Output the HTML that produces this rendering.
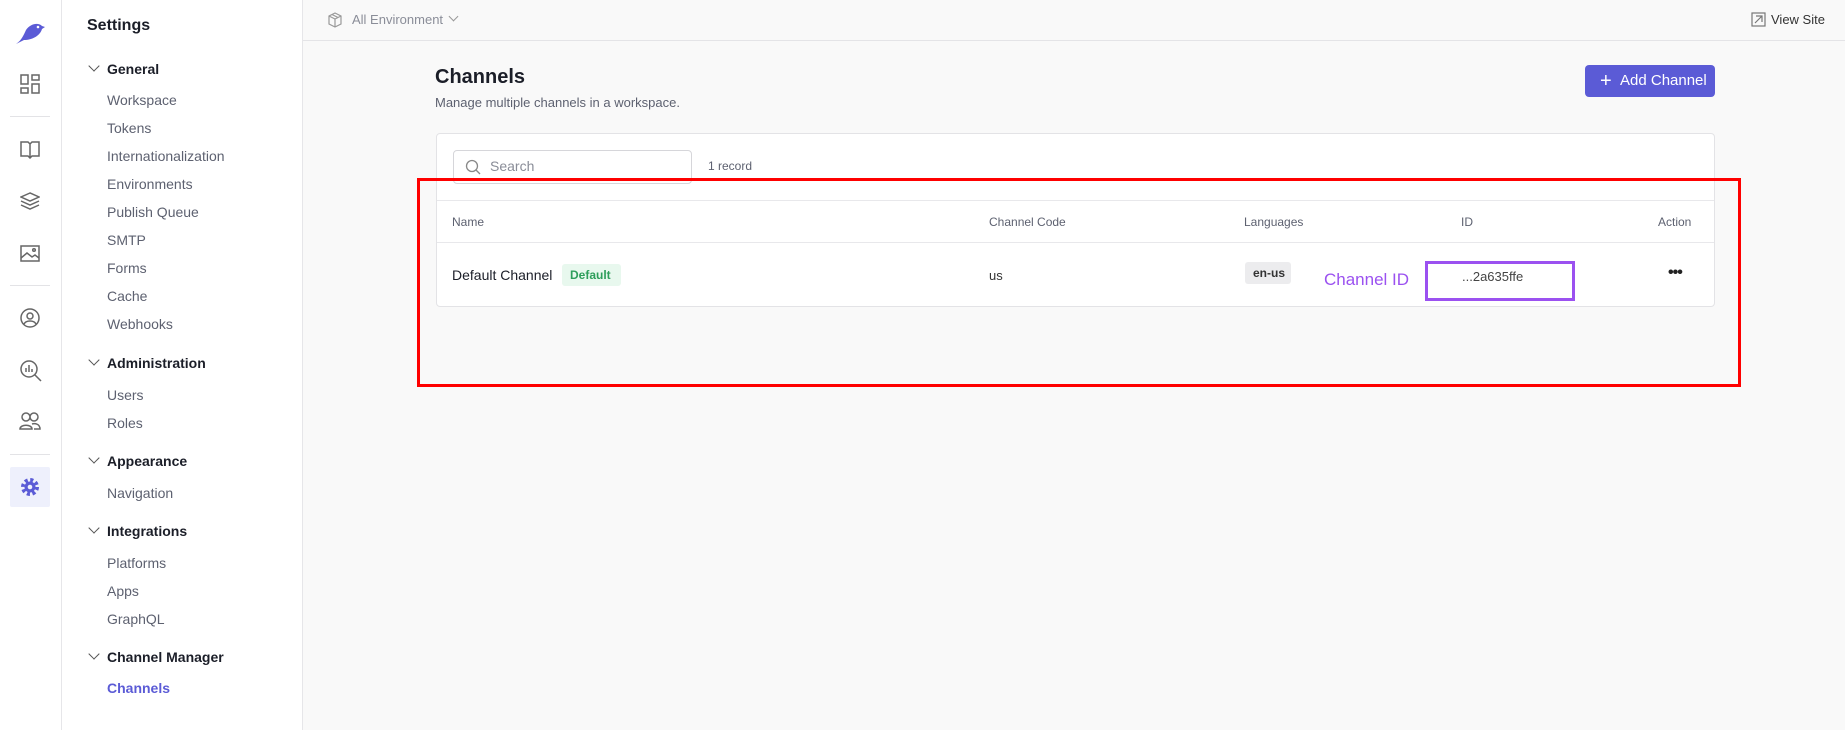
<!DOCTYPE html>
<html><head><meta charset="utf-8"><style>
*{box-sizing:border-box;margin:0;padding:0}
body{width:1845px;height:730px;overflow:hidden;background:#f9f9f9;font-family:"Liberation Sans",sans-serif;position:relative;color:#1f2430}
.a{position:absolute;white-space:nowrap}
.rail{left:0;top:0;width:62px;height:730px;background:#fff;border-right:1px solid #e6e6e9}
.side{left:62px;top:0;width:241px;height:730px;background:#fff;border-right:1px solid #e6e6e9}
.it{font-size:14px;color:#5d6170;left:107px}
.hd{font-size:14px;font-weight:bold;color:#1b1e28;left:107px}
.ch{left:90px;width:8px;height:8px;border-right:1.3px solid #555;border-bottom:1.3px solid #555;transform:rotate(45deg)}
.dv{left:10px;width:40px;height:1px;background:#e3e3e6}
svg{position:absolute}
.th{font-size:12px;color:#5d6170;top:215px}
</style></head><body>
<div class="a rail"></div>
<svg style="left:14px;top:20px" width="32" height="26" viewBox="0 0 32 26"><path d="M2 24 C8 20 10 14 12 10 C16 4 24 2 28 6 L31 7 L28 9 C26 16 18 20 10 20 Z" fill="#5b5bd6"/><circle cx="24" cy="7" r="1.3" fill="#fff"/></svg>
<svg style="left:20px;top:74px" width="20" height="20" fill="none" stroke="#666" stroke-width="1.5"><rect x="1" y="1" width="7" height="9"/><rect x="12" y="1" width="7" height="5"/><rect x="1" y="14" width="7" height="5"/><rect x="12" y="10" width="7" height="9"/></svg>
<div class="a dv" style="top:116px"></div>
<svg style="left:20px;top:139px" width="20" height="20" fill="none" stroke="#666" stroke-width="1.5"><path d="M1 3h7l2 2 2-2h7v14h-7l-2 2-2-2H1z M10 5v14"/></svg>
<svg style="left:20px;top:191px" width="20" height="20" fill="none" stroke="#666" stroke-width="1.5"><path d="M10 2L1 6l9 4 9-4z M1 10l9 4 9-4 M1 14l9 4 9-4"/></svg>
<svg style="left:20px;top:245px" width="20" height="18" fill="none" stroke="#666" stroke-width="1.5"><rect x="1" y="1" width="18" height="15"/><path d="M1 13l6-5 5 4 3-2 4 3"/><circle cx="14" cy="5" r="1.3"/></svg>
<div class="a dv" style="top:285px"></div>
<svg style="left:20px;top:308px" width="20" height="20" fill="none" stroke="#666" stroke-width="1.5"><circle cx="10" cy="10" r="9"/><circle cx="10" cy="8" r="3"/><path d="M4 16c2-4 10-4 12 0"/></svg>
<svg style="left:20px;top:360px" width="22" height="22" fill="none" stroke="#666" stroke-width="1.5"><circle cx="9" cy="9" r="8"/><path d="M15 15l6 6 M6 12V8 M9 12V5 M12 12V9"/></svg>
<svg style="left:19px;top:411px" width="22" height="20" fill="none" stroke="#666" stroke-width="1.5"><circle cx="7" cy="6" r="4"/><circle cx="15" cy="6" r="4"/><path d="M1 18c0-5 12-5 12 0z M13 13c3-1 8 0 8 5h-6"/></svg>
<div class="a dv" style="top:454px"></div>
<div class="a" style="left:10px;top:467px;width:40px;height:40px;background:#eef0fc;border-radius:2px"></div>
<svg style="left:20px;top:477px" width="20" height="20"><circle cx="10" cy="10" r="7" fill="none" stroke="#5b5bd6" stroke-width="4" stroke-dasharray="3 2.5"/><circle cx="10" cy="10" r="5.5" fill="#5b5bd6"/><circle cx="10" cy="10" r="2.3" fill="#eef0fc"/></svg>

<div class="a side"></div>
<div class="a" style="left:87px;top:17px;font-size:16px;font-weight:bold;color:#1b1e28">Settings</div>
<div class="a ch" style="top:62px"></div><div class="a hd" style="top:61px">General</div>
<div class="a it" style="top:92px">Workspace</div>
<div class="a it" style="top:120px">Tokens</div>
<div class="a it" style="top:148px">Internationalization</div>
<div class="a it" style="top:176px">Environments</div>
<div class="a it" style="top:204px">Publish Queue</div>
<div class="a it" style="top:232px">SMTP</div>
<div class="a it" style="top:260px">Forms</div>
<div class="a it" style="top:288px">Cache</div>
<div class="a it" style="top:316px">Webhooks</div>
<div class="a ch" style="top:356px"></div><div class="a hd" style="top:355px">Administration</div>
<div class="a it" style="top:387px">Users</div>
<div class="a it" style="top:415px">Roles</div>
<div class="a ch" style="top:454px"></div><div class="a hd" style="top:453px">Appearance</div>
<div class="a it" style="top:485px">Navigation</div>
<div class="a ch" style="top:524px"></div><div class="a hd" style="top:523px">Integrations</div>
<div class="a it" style="top:555px">Platforms</div>
<div class="a it" style="top:583px">Apps</div>
<div class="a it" style="top:611px">GraphQL</div>
<div class="a ch" style="top:650px"></div><div class="a hd" style="top:649px">Channel Manager</div>
<div class="a it" style="top:680px;color:#5b5bd6;font-weight:bold">Channels</div>

<div class="a" style="left:303px;top:40px;width:1542px;height:1px;background:#e4e4e7"></div>
<svg style="left:328px;top:12px" width="14" height="16" fill="none" stroke="#999" stroke-width="1.2"><path d="M7 1l6 3v8l-6 3-6-3V4z M1 4l6 3 6-3 M7 7v8 M4 2.5l6 3"/></svg>
<div class="a" style="left:352px;top:12px;font-size:13px;color:#8a8d98">All Environment</div>
<div class="a" style="left:450px;top:13px;width:7px;height:7px;border-right:1.2px solid #999;border-bottom:1.2px solid #999;transform:rotate(45deg)"></div>
<svg style="left:1751px;top:12px" width="15" height="15" fill="none" stroke="#777" stroke-width="1.2"><rect x="1" y="1" width="13" height="13"/><path d="M4 11l7-7 M5 4h6v6"/></svg>
<div class="a" style="left:1771px;top:12px;font-size:13px;color:#333">View Site</div>

<div class="a" style="left:435px;top:66px;font-size:20px;font-weight:bold;color:#1b1e28">Channels</div>
<div class="a" style="left:435px;top:95px;font-size:13px;color:#5d6170">Manage multiple channels in a workspace.</div>
<div class="a" style="left:1585px;top:65px;width:130px;height:32px;background:#5b5bd6;border-radius:4px;color:#fff;font-size:15px;padding:7px 0 0 35px">Add Channel</div>
<div class="a" style="left:1600px;top:73px;color:#fff;font-size:20px;line-height:16px">+</div>

<div class="a" style="left:436px;top:133px;width:1279px;height:174px;background:#fff;border:1px solid #e3e3e6;border-radius:4px"></div>
<div class="a" style="left:453px;top:150px;width:239px;height:34px;border:1px solid #d6d6da;border-radius:4px"></div>
<svg style="left:465px;top:159px" width="16" height="16" fill="none" stroke="#888" stroke-width="1.3"><circle cx="7" cy="7" r="5.5"/><path d="M11 11l4 4"/></svg>
<div class="a" style="left:490px;top:158px;font-size:14px;color:#8a8d98">Search</div>
<div class="a" style="left:708px;top:159px;font-size:12px;color:#5d6170">1 record</div>
<div class="a" style="left:437px;top:200px;width:1277px;height:1px;background:#e8e8eb"></div>
<div class="a" style="left:437px;top:242px;width:1277px;height:1px;background:#e8e8eb"></div>
<div class="a th" style="left:452px">Name</div>
<div class="a th" style="left:989px">Channel Code</div>
<div class="a th" style="left:1244px">Languages</div>
<div class="a th" style="left:1461px">ID</div>
<div class="a th" style="left:1658px">Action</div>
<div class="a" style="left:452px;top:267px;font-size:14px;color:#1b1e28">Default Channel</div>
<div class="a" style="left:562px;top:264px;width:59px;height:22px;background:#e8f8ee;border-radius:3px;font-size:12px;font-weight:bold;color:#2e9e5b;padding:4px 0 0 8px">Default</div>
<div class="a" style="left:989px;top:268px;font-size:13px;color:#333">us</div>
<div class="a" style="left:1245px;top:262px;width:46px;height:22px;background:#ececee;border-radius:3px;font-size:12px;font-weight:bold;color:#333;padding:4px 0 0 8px">en-us</div>
<div class="a" style="left:1324px;top:270px;font-size:17px;color:#9b51f0">Channel ID</div>
<div class="a" style="left:1425px;top:261px;width:150px;height:40px;border:3px solid #9b51f0"></div>
<div class="a" style="left:1462px;top:269px;font-size:13px;color:#444">...2a635ffe</div>
<div class="a" style="left:1668px;top:264px;font-size:16px;font-weight:bold;color:#222;letter-spacing:-1px">•••</div>

<div class="a" style="left:417px;top:178px;width:1324px;height:209px;border:3px solid #ff0000"></div>
</body></html>
